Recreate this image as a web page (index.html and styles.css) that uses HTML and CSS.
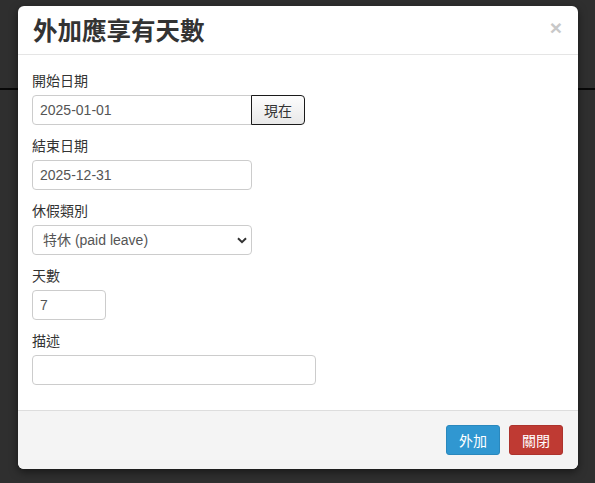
FILE: index.html
```html
<!DOCTYPE html>
<html lang="zh-Hant">
<head>
<meta charset="utf-8">
<title>外加應享有天數</title>
<link rel="stylesheet" href="styles.css">
</head>
<body>
<div class="page">
  <div class="topbar"></div>
</div>
<div class="modal">
  <div class="modal-header">
    <h4 class="modal-title">外加應享有天數</h4>
    <span class="close">×</span>
  </div>
  <div class="modal-body">
    <div class="group">
      <label class="label">開始日期</label>
      <div class="input-group">
        <input class="control w-date" type="text" value="2025-01-01">
        <button class="btn-now" type="button">現在</button>
      </div>
    </div>
    <div class="group">
      <label class="label">結束日期</label>
      <input class="control w-date" type="text" value="2025-12-31">
    </div>
    <div class="group">
      <label class="label">休假類別</label>
      <div class="select-wrap">
        <select class="control w-date select">
          <option>特休 (paid leave)</option>
        </select>
        <svg class="chev" width="10" height="7" viewBox="0 0 10 7"><path d="M1 1.2 L5 5.2 L9 1.2" fill="none" stroke="#333" stroke-width="2"/></svg>
      </div>
    </div>
    <div class="group">
      <label class="label">天數</label>
      <input class="control w-days" type="text" value="7">
    </div>
    <div class="group">
      <label class="label">描述</label>
      <input class="control w-desc" type="text" value="">
    </div>
  </div>
  <div class="modal-footer">
    <button class="btn btn-primary" type="button">外加</button>
    <button class="btn btn-danger" type="button">關閉</button>
  </div>
</div>
</body>
</html>
```

FILE: styles.css
```css
* { box-sizing: border-box; }
html, body { margin: 0; padding: 0; }
body {
  background: #2f2f2f;
  font-family: "Liberation Sans", Arial, "Noto Sans CJK TC", sans-serif;
  font-size: 14px;
  color: #333;
  width: 595px;
  height: 483px;
  overflow: hidden;
  position: relative;
}
.page { height: 483px; }
.topbar {
  height: 90px;
  border-bottom: 2px solid #080808;
}
.modal {
  position: absolute;
  left: 18px;
  top: 6px;
  width: 560px;
  background: #fff;
  border-radius: 6px;
  box-shadow: 0 3px 9px rgba(0,0,0,0.5);
  overflow: hidden;
}
.modal-header {
  display: flex;
  justify-content: space-between;
  align-items: center;
  padding: 10px 15px 11px;
  border-bottom: 1px solid #e5e5e5;
}
.modal-title {
  margin: 0;
  font-family: "Noto Sans CJK TC", sans-serif;
  font-size: 24.5px;
  font-weight: 700;
  line-height: 27px;
  color: #333;
}
.close {
  font-family: "Liberation Sans", Arial, sans-serif;
  font-size: 21px;
  font-weight: 700;
  line-height: 1;
  color: #c8c8c8;
  margin-right: 1px;
  margin-top: -4px;
}
.modal-body {
  padding: 15px 14px 15px;
}
.group {
  margin-bottom: 10px;
}
.label {
  display: block;
  font-family: "Noto Sans CJK TC", sans-serif;
  font-size: 14px;
  line-height: 20px;
  margin-bottom: 5px;
  color: #333;
}
.control {
  display: block;
  height: 30px;
  padding: 5px 7px;
  font-family: "Liberation Sans", Arial, "Noto Sans CJK TC", sans-serif;
  font-size: 14px;
  color: #555;
  background: #fff;
  border: 1px solid #ccc;
  border-radius: 4px;
  outline: none;
}
.w-date { width: 220px; }
.w-days { width: 74px; }
.w-desc { width: 284px; }
.input-group {
  display: flex;
}
.input-group .control {
  border-top-right-radius: 0;
  border-bottom-right-radius: 0;
}
.btn-now {
  margin-left: -1px;
  width: 54px;
  height: 30px;
  font-family: "Noto Sans CJK TC", sans-serif;
  font-size: 14px;
  color: #333;
  background: linear-gradient(#fdfdfd, #e8e8e8);
  border: 1px solid #1a1a1a;
  border-radius: 0 4px 4px 0;
  padding: 0;
}
.select-wrap {
  position: relative;
  width: 220px;
}
.select {
  appearance: none;
  -webkit-appearance: none;
  padding-left: 10px;
  font-family: "Liberation Sans", Arial, "Noto Sans CJK TC", sans-serif;
}
.chev {
  position: absolute;
  right: 5px;
  top: 12px;
}
.modal-footer {
  display: flex;
  justify-content: flex-end;
  gap: 9px;
  padding: 14px 15px;
  background: #f4f4f4;
  border-top: 1px solid #dddddd;
}
.btn {
  height: 30px;
  width: 54px;
  padding: 0;
  font-family: "Noto Sans CJK TC", sans-serif;
  font-size: 14px;
  color: #fff;
  border-radius: 3px;
  border: 1px solid transparent;
}
.btn-primary { background: #3097d1; border-color: #2a88bd; }
.btn-danger { background: #bf3a33; border-color: #ad332d; }
```
